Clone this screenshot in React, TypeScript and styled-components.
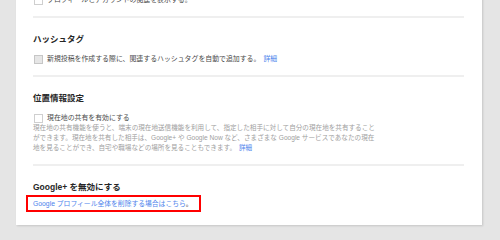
import React from "react";
import styled, { createGlobalStyle } from "styled-components";

const GlobalStyle = createGlobalStyle`
  html, body {
    margin: 0;
    padding: 0;
    background: #e5e5e5;
    overflow: hidden;
  }
  body {
    font-family: "Liberation Sans", "Noto Sans CJK JP", sans-serif;
  }
`;

const Page = styled.div`
  width: 500px;
  height: 240px;
  overflow: hidden;
`;

const Card = styled.div`
  margin: -20px 0 0 16px;
  width: 466px;
  box-sizing: border-box;
  padding: 0 18px 13px 17px;
  background: #fff;
  box-shadow: 1px 1px 2px rgba(0, 0, 0, 0.14);
`;

const Section = styled.section<{ $last?: boolean }>`
  padding: 15px 0 ${p => (p.$last ? "0" : "11px")};
  border-bottom: ${p => (p.$last ? "none" : "2px solid #efefef")};
`;

const Heading = styled.h3`
  margin: 0 0 9px;
  font-size: 8.5px;
  line-height: 12px;
  font-weight: bold;
  color: #262626;
`;

const Row = styled.label`
  display: flex;
  align-items: center;
  height: 10px;
  font-size: 6.9px;
  line-height: 10px;
  color: #4a4a4a;
  white-space: nowrap;
`;

const Box = styled.span<{ $disabled?: boolean }>`
  display: inline-block;
  width: 7px;
  height: 7px;
  margin: 0 4px 0 1px;
  border: 1px solid ${p => (p.$disabled ? "#c6c6c6" : "#cfcfcf")};
  background: ${p => (p.$disabled ? "#e6e6e6" : "#fff")};
  flex: none;
`;

const Link = styled.a`
  color: #4d83ec;
  text-decoration: none;
  margin-left: 3px;
`;

const Desc = styled.div`
  font-size: 6.6px;
  line-height: 10px;
  color: #a0a0a0;
  white-space: nowrap;
`;

const DescLine = styled.div`
  height: 10px;
`;

const Highlight = styled.div`
  display: flex;
  width: max-content;
  margin: -7px 0 0 -7px;
  padding: 2px 6px 1px 5px;
  border: 2px solid #f00;
  font-size: 6.8px;
  line-height: 10px;
  white-space: nowrap;
  color: #4d83ec;
`;

const Dot = styled.span`
  color: #333;
`;

export default function App() {
  return (
    <Page>
      <GlobalStyle />
      <Card>
        <Section>
          <Row>
            <Box />
            プロフィールとアカウントの関連を表示する。
          </Row>
        </Section>

        <Section>
          <Heading>ハッシュタグ</Heading>
          <Row>
            <Box $disabled />
            新規投稿を作成する際に、関連するハッシュタグを自動で追加する。
            <Link href="#">詳細</Link>
          </Row>
        </Section>

        <Section>
          <Heading>位置情報設定</Heading>
          <Row>
            <Box />
            現在地の共有を有効にする
          </Row>
          <Desc>
            <DescLine>
              現在地の共有機能を使うと、端末の現在地送信機能を利用して、指定した相手に対して自分の現在地を共有すること
            </DescLine>
            <DescLine>
              ができます。現在地を共有した相手は、Google+ や Google Now など、さまざまな Google サービスであなたの現在
            </DescLine>
            <DescLine>
              地を見ることができ、自宅や職場などの場所を見ることもできます。
              <Link href="#">詳細</Link>
            </DescLine>
          </Desc>
        </Section>

        <Section $last>
          <Heading>Google+ を無効にする</Heading>
          <Highlight>
            Google プロフィール全体を削除する場合はこちら<Dot>。</Dot>
          </Highlight>
        </Section>
      </Card>
    </Page>
  );
}
